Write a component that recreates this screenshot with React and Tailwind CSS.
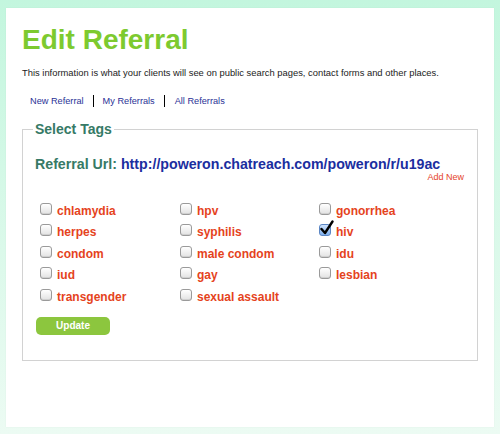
import React from "react";

const tags = [
  ["chlamydia", false], ["hpv", false], ["gonorrhea", false],
  ["herpes", false], ["syphilis", false], ["hiv", true],
  ["condom", false], ["male condom", false], ["idu", false],
  ["iud", false], ["gay", false], ["lesbian", false],
  ["transgender", false], ["sexual assault", false],
];

function Box({ checked }) {
  if (checked) {
    return (
      <span className="relative inline-block w-[12px] h-[12px] mt-[-4px] shrink-0">
        <span className="absolute inset-0 rounded-[3px] border border-[#5b86c4] bg-gradient-to-b from-[#cfe2fb] to-[#7fb0ee]" />
        <svg className="absolute left-[1px] top-[-4px]" width="14" height="15" viewBox="0 0 14 15">
          <path d="M1.5 9 L5 13 L12.5 1.5" fill="none" stroke="#000" strokeWidth="2.4" strokeLinecap="round" strokeLinejoin="round" />
        </svg>
      </span>
    );
  }
  return (
    <span className="inline-block w-[12px] h-[12px] mt-[-4px] shrink-0 rounded-[3px] border border-[#9a9a9a] bg-gradient-to-b from-[#ffffff] to-[#e2e2e2] shadow-[inset_0_-1px_0_#d0d0d0]" />
  );
}

export default function App() {
  return (
    <div
      className="w-[500px] h-[434px] pt-[8px] px-[6px] bg-gradient-to-b from-[#c3f6de] to-[#ecfbf3]"
      style={{ fontFamily: '"Liberation Sans", Arial, Helvetica, sans-serif' }}
    >
      <div className="h-[419px] bg-white pt-[16px] pl-[16px] pr-[16px] shadow-[0_0_1px_rgba(0,0,0,0.08)]">
        <h1 className="text-[28px] leading-[32px] font-bold text-[#7dca2f]">Edit Referral</h1>
        <p className="mt-[11px] text-[9.4px] leading-[12px] text-[#222]">
          This information is what your clients will see on public search pages, contact forms and other places.
        </p>
        <div className="mt-[16px] pl-[8px] flex items-center text-[9.2px] leading-[12px] text-[#2a3196]">
          <span className="pr-[9px]">New Referral</span>
          <span className="w-[1px] h-[12px] bg-black" />
          <span className="px-[9px]">My Referrals</span>
          <span className="w-[1px] h-[12px] bg-black" />
          <span className="pl-[10px]">All Referrals</span>
        </div>
        <fieldset className="mt-[14px] h-[240px] border border-[#d2d2d2] pl-[10px] pr-[13px]">
          <legend className="px-[2px] text-[14px] leading-[17px] font-bold text-[#367a66]">Select Tags</legend>
          <div className="mt-[18px] pl-[2px] text-[14.2px] leading-[17px] font-bold">
            <span className="text-[#367a66]">Referral Url: </span>
            <span className="text-[#1b2e9f]">http://poweron.chatreach.com/poweron/r/u19ac</span>
          </div>
          <div className="-mt-[1px] text-right text-[9px] leading-[11px] text-[#e5432a]">Add New</div>
          <div className="mt-[17px] pl-[7px] grid grid-cols-[140px_139px_140px]">
            {tags.map(([name, checked]) => (
              <div key={name} className="h-[21.5px] flex items-center gap-[5px]">
                <Box checked={checked} />
                <span className="text-[12px] leading-[14px] font-bold text-[#e5431d]">{name}</span>
              </div>
            ))}
          </div>
          <button className="mt-[9.5px] ml-[3px] w-[74px] h-[18px] rounded-[5px] bg-[#8cc63e] text-white text-[10px] font-bold leading-[18px] text-center">
            Update
          </button>
        </fieldset>
      </div>
    </div>
  );
}
